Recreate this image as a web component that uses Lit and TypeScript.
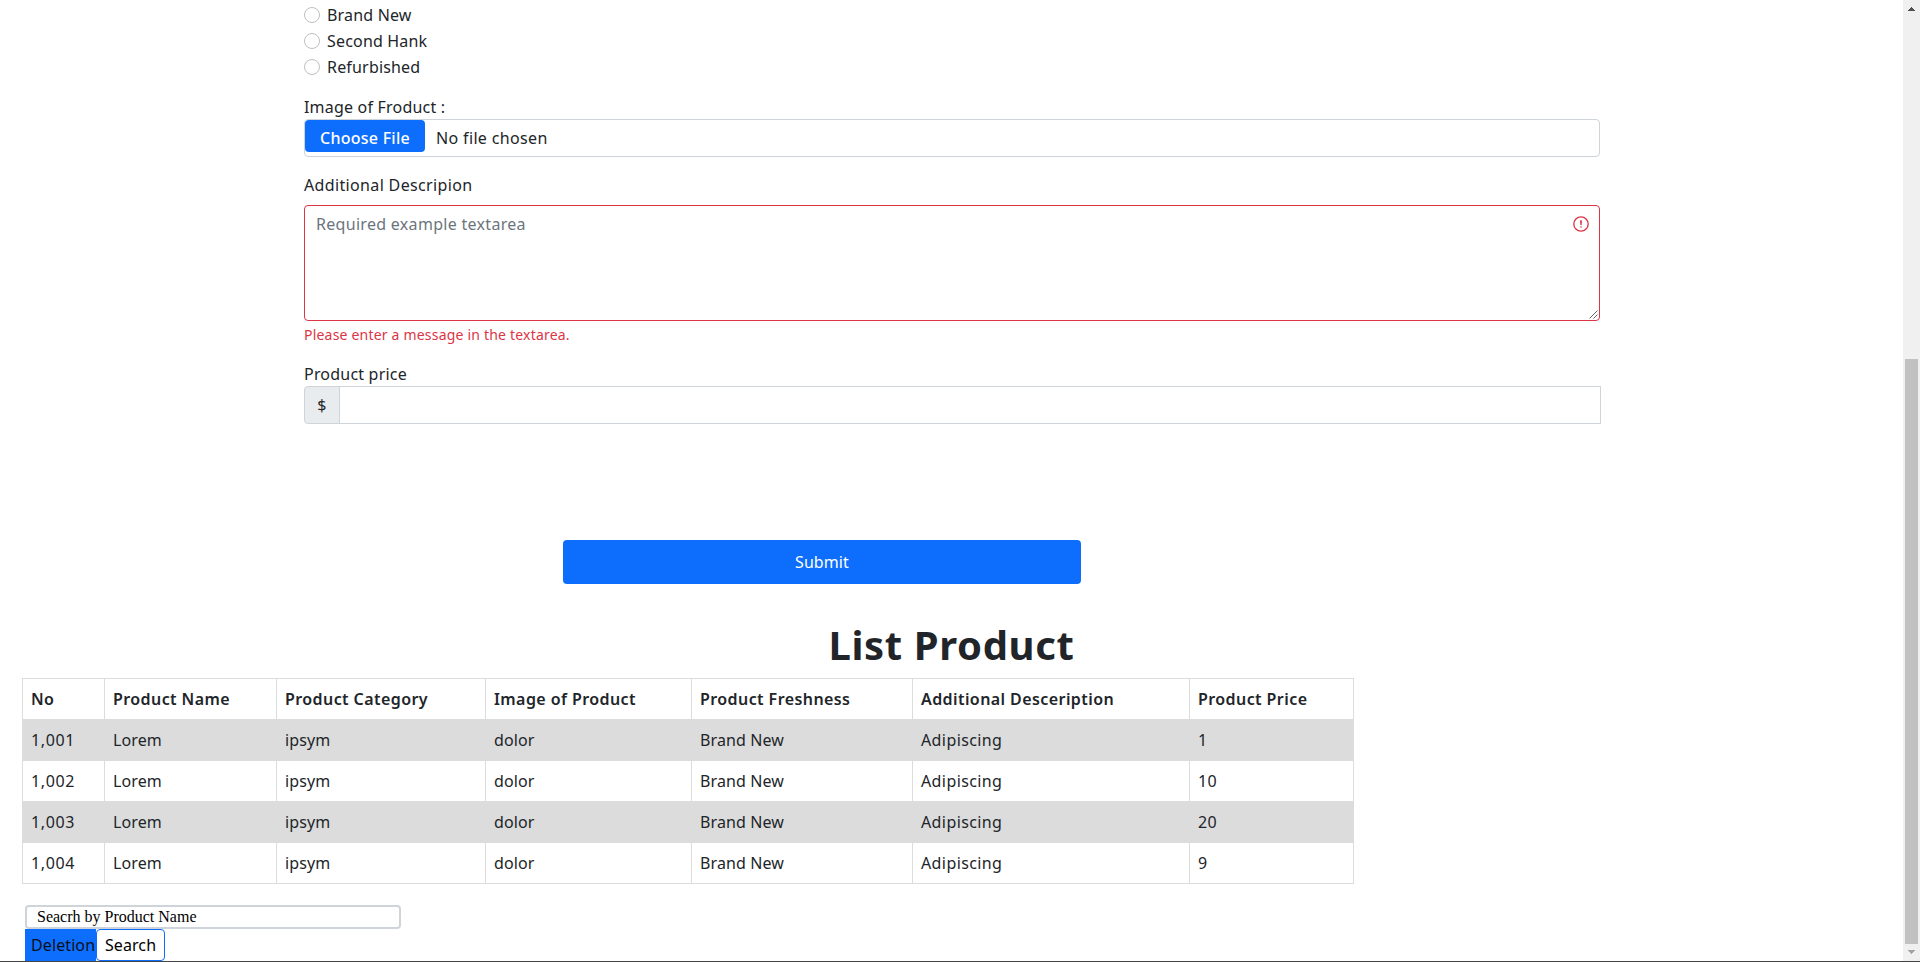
import { LitElement, html, css } from "lit";
import { customElement } from "lit/decorators.js";

interface Product {
  no: string;
  name: string;
  category: string;
  image: string;
  freshness: string;
  description: string;
  price: string;
}

const PRODUCTS: Product[] = [
  ["1,001", "1"],
  ["1,002", "10"],
  ["1,003", "20"],
  ["1,004", "9"],
].map(([no, price]) => ({
  no,
  name: "Lorem",
  category: "ipsym",
  image: "dolor",
  freshness: "Brand New",
  description: "Adipiscing",
  price,
}));

@customElement("product-form")
export class ProductForm extends LitElement {
  static styles = css`
    :host { display: block; width: 1296px; margin-left: 304px; line-height: 24px; letter-spacing: 0.25px; }
    .radio { display: flex; align-items: center; height: 26px; gap: 7px; letter-spacing: 0.18px; }
    .dot { box-sizing: border-box; width: 16px; height: 16px; border: 1px solid #bfbfbf; border-radius: 50%; }
    .label { height: 24px; white-space: nowrap; }
    .image { margin-top: 15px; letter-spacing: 0.2px; }
    .file { box-sizing: border-box; height: 38px; border: 1px solid #ced4da; border-radius: 4px; display: flex; align-items: flex-start; }
    .choose { box-sizing: border-box; width: 120px; height: 32px; border-radius: 4px; background: #0d6efd; color: #fff; text-align: center; line-height: 36px; font-weight: 500; }
    .none { margin-left: 11px; line-height: 36px; letter-spacing: 0.35px; }
    .desc { margin-top: 16px; letter-spacing: 0.35px; }
    .area { box-sizing: border-box; height: 116px; margin-top: 8px; padding: 6px 10px 0 11px; border: 1px solid #dc3545; border-radius: 4px; display: flex; justify-content: space-between; color: #6c757d; position: relative; letter-spacing: 0.3px; }
    .alert { width: 16px; height: 16px; margin-top: 4px; }
    .grip { position: absolute; right: 1px; bottom: 1px; width: 9px; height: 9px; }
    .error { height: 21px; line-height: 21px; margin-top: 3px; font-size: 14px; color: #dc3545; letter-spacing: 0.2px; }
    .price { margin-top: 17px; letter-spacing: 0.2px; }
    .group { display: flex; width: 1297px; height: 38px; }
    .addon { box-sizing: border-box; width: 36px; border: 1px solid #ced4da; border-radius: 4px 0 0 4px; background: #e9ecef; text-align: center; line-height: 36px; }
    .field { box-sizing: border-box; flex: 1; margin-left: -1px; border: 1px solid #ced4da; background: #fff; }
    .submit { width: 518px; height: 44px; margin: 116px 0 0 259px; border-radius: 4px; background: #0d6efd; color: #fff; text-align: center; line-height: 44px; letter-spacing: 0.1px; }
  `;

  render() {
    return html`
      ${["Brand New", "Second Hank", "Refurbished"].map(
        (label) => html`<div class="radio"><span class="dot"></span><span>${label}</span></div>`
      )}
      <div class="label image">Image of Froduct :</div>
      <div class="file"><div class="choose">Choose File</div><div class="none">No file chosen</div></div>
      <div class="label desc">Additional Descripion</div>
      <div class="area">
        <span>Required example textarea</span>
        <svg class="alert" viewBox="0 0 12 12" fill="none" stroke="#dc3545">
          <circle cx="6" cy="6" r="5.4" />
          <path stroke-linejoin="round" d="M5.8 3.6h.4L6 6.5z" />
          <circle cx="6" cy="8.2" r=".6" fill="#dc3545" stroke="none" />
        </svg>
        <svg class="grip" viewBox="0 0 9 9" stroke="#555" stroke-width="0.9"><path d="M0.5 8.5L8.5 0.5M4.5 8.5L8.5 4.5" /></svg>
      </div>
      <div class="error">Please enter a message in the textarea.</div>
      <div class="label price">Product price</div>
      <div class="group"><div class="addon">$</div><div class="field"></div></div>
      <div class="submit">Submit</div>
    `;
  }
}

@customElement("product-list")
export class ProductList extends LitElement {
  static styles = css`
    :host { display: block; margin-left: 22px; }
    .table { display: grid; box-sizing: border-box; width: 1332px; grid-template-columns: 82px 172px 209px 206px 221px 277px 165px; grid-auto-rows: 41px; }
    .cell { box-sizing: border-box; border: solid #dcdcdc; border-width: 1px 0 0 1px; padding-left: 8px; line-height: 41px; white-space: nowrap; letter-spacing: 0.1px; }
    .no { letter-spacing: 0.6px; }
    .description, .price { letter-spacing: 0.4px; }
    .last { border-right-width: 1px; }
    .end { border-bottom-width: 1px; height: 42px; }
    .head { font-weight: 600; letter-spacing: 0.42px; }
    .odd { background: #dcdcdc; }
  `;

  render() {
    const heads = ["No", "Product Name", "Product Category", "Image of Product", "Product Freshness", "Additional Desceription", "Product Price"];
    return html`
      <div class="table">
        ${heads.map((h, i) => html`<div class="cell head ${i === 6 ? "last" : ""}">${h}</div>`)}
        ${PRODUCTS.map((p, r) =>
          Object.entries(p).map(
            ([key, v], i) => html`<div class="cell ${key} ${r % 2 ? "" : "odd"} ${i === 6 ? "last" : ""} ${r === 3 ? "end" : ""}">${v}</div>`
          )
        )}
      </div>
    `;
  }
}

@customElement("app-root")
export class AppRoot extends LitElement {
  static styles = css`
    :host { display: flex; flex-direction: column; box-sizing: border-box; height: 962px; overflow: hidden; border-bottom: 1px solid #444; background: #fff; color: #212529; font: 16px/24px "Noto Sans", sans-serif; letter-spacing: 0.4px; }
    .body { display: flex; flex: 1; min-height: 0; }
    .page { width: 1903px; padding-top: 2px; box-sizing: border-box; }
    .title { margin: 37px 0 9px; font-size: 40px; line-height: 48px; font-weight: 700; text-align: center; letter-spacing: 0.65px; }
    .search { box-sizing: border-box; width: 376px; height: 24px; margin: 22px 0 0 25px; padding-left: 10px; border: 2px solid #ced4da; border-radius: 4px; font: 16px/20px "Liberation Serif", serif; letter-spacing: 0; color: #000; }
    .actions { display: flex; margin-left: 25px; height: 32px; line-height: 32px; color: #000; }
    .delete { width: 65px; padding-left: 6px; background: #0d6efd; color: #0b0f19; letter-spacing: 0.1px; }
    .find { box-sizing: border-box; width: 69px; border: 1px solid #0d6efd; border-radius: 4px; line-height: 30px; text-align: center; letter-spacing: 0.1px; }
    .scroll { width: 17px; background: #f0f0f0; display: flex; flex-direction: column; align-items: center; }
    .up, .down { width: 7px; height: 4px; }
    .up { margin-top: 7px; }
    .thumb { width: 13px; height: 585px; margin: 348px 0 6px; background: #c1c1c1; }
  `;

  render() {
    return html`
      <div class="body">
        <div class="page">
          <product-form></product-form>
          <div class="title">List Product</div>
          <product-list></product-list>
          <div class="search">Seacrh by Product Name</div>
          <div class="actions"><div class="delete">Deletion</div><div class="find">Search</div></div>
        </div>
        <div class="scroll">
          <svg class="up" viewBox="0 0 7 4" fill="#505050" shape-rendering="crispEdges"><path d="M3 0h1v1h1v1h1v1h1v1H0V3h1V2h1V1h1z" /></svg>
          <div class="thumb"></div>
          <svg class="down" viewBox="0 0 7 4" fill="#a3a3a3" shape-rendering="crispEdges"><path d="M0 0h7v1H6v1H5v1H4v1H3V3H2V2H1V1H0z" /></svg>
        </div>
      </div>
    `;
  }
}
